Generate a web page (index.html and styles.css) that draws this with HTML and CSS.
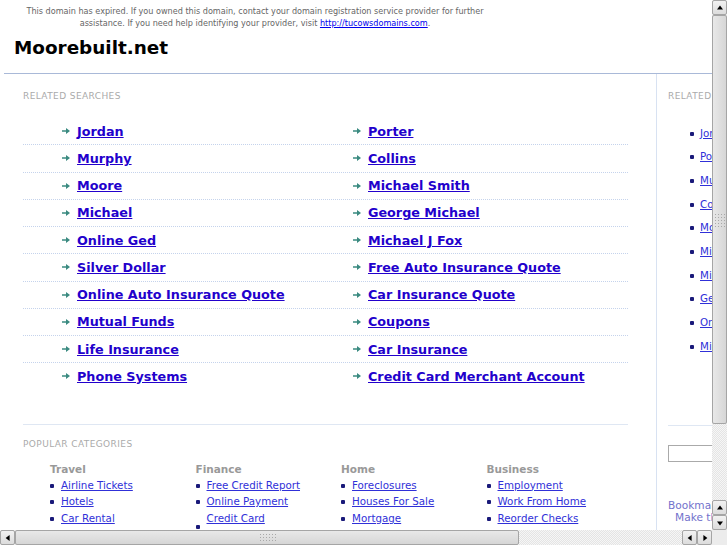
FILE: index.html
```html
<!DOCTYPE html>
<html lang="en">
<head>
  <meta charset="UTF-8">
  <title>Moorebuilt.net</title>
  <link rel="stylesheet" href="styles.css">
</head>
<body>
<div id="viewport">
<div id="page">
  <div id="notice">
    This domain has expired. If you owned this domain, contact your domain registration service provider for further assistance. If you need help identifying your provider, visit <a href="#">http://tucowsdomains.com</a>.
  </div>
  <div id="header"><h1>Moorebuilt.net</h1></div>
  <div id="main">
    <div id="content">
      <div class="label">RELATED SEARCHES</div>
      <div id="searches">
        <div class="row">
          <span class="item"><svg class="arrow" viewBox="0 0 8 6"><path d="M0 2.2h4V0l4 3-4 3V3.8H0z"/></svg><a href="#">Jordan</a></span>
          <span class="item"><svg class="arrow" viewBox="0 0 8 6"><path d="M0 2.2h4V0l4 3-4 3V3.8H0z"/></svg><a href="#">Porter</a></span>
        </div>
        <div class="row">
          <span class="item"><svg class="arrow" viewBox="0 0 8 6"><path d="M0 2.2h4V0l4 3-4 3V3.8H0z"/></svg><a href="#">Murphy</a></span>
          <span class="item"><svg class="arrow" viewBox="0 0 8 6"><path d="M0 2.2h4V0l4 3-4 3V3.8H0z"/></svg><a href="#">Collins</a></span>
        </div>
        <div class="row">
          <span class="item"><svg class="arrow" viewBox="0 0 8 6"><path d="M0 2.2h4V0l4 3-4 3V3.8H0z"/></svg><a href="#">Moore</a></span>
          <span class="item"><svg class="arrow" viewBox="0 0 8 6"><path d="M0 2.2h4V0l4 3-4 3V3.8H0z"/></svg><a href="#">Michael Smith</a></span>
        </div>
        <div class="row">
          <span class="item"><svg class="arrow" viewBox="0 0 8 6"><path d="M0 2.2h4V0l4 3-4 3V3.8H0z"/></svg><a href="#">Michael</a></span>
          <span class="item"><svg class="arrow" viewBox="0 0 8 6"><path d="M0 2.2h4V0l4 3-4 3V3.8H0z"/></svg><a href="#">George Michael</a></span>
        </div>
        <div class="row">
          <span class="item"><svg class="arrow" viewBox="0 0 8 6"><path d="M0 2.2h4V0l4 3-4 3V3.8H0z"/></svg><a href="#">Online Ged</a></span>
          <span class="item"><svg class="arrow" viewBox="0 0 8 6"><path d="M0 2.2h4V0l4 3-4 3V3.8H0z"/></svg><a href="#">Michael J Fox</a></span>
        </div>
        <div class="row">
          <span class="item"><svg class="arrow" viewBox="0 0 8 6"><path d="M0 2.2h4V0l4 3-4 3V3.8H0z"/></svg><a href="#">Silver Dollar</a></span>
          <span class="item"><svg class="arrow" viewBox="0 0 8 6"><path d="M0 2.2h4V0l4 3-4 3V3.8H0z"/></svg><a href="#">Free Auto Insurance Quote</a></span>
        </div>
        <div class="row">
          <span class="item"><svg class="arrow" viewBox="0 0 8 6"><path d="M0 2.2h4V0l4 3-4 3V3.8H0z"/></svg><a href="#">Online Auto Insurance Quote</a></span>
          <span class="item"><svg class="arrow" viewBox="0 0 8 6"><path d="M0 2.2h4V0l4 3-4 3V3.8H0z"/></svg><a href="#">Car Insurance Quote</a></span>
        </div>
        <div class="row">
          <span class="item"><svg class="arrow" viewBox="0 0 8 6"><path d="M0 2.2h4V0l4 3-4 3V3.8H0z"/></svg><a href="#">Mutual Funds</a></span>
          <span class="item"><svg class="arrow" viewBox="0 0 8 6"><path d="M0 2.2h4V0l4 3-4 3V3.8H0z"/></svg><a href="#">Coupons</a></span>
        </div>
        <div class="row">
          <span class="item"><svg class="arrow" viewBox="0 0 8 6"><path d="M0 2.2h4V0l4 3-4 3V3.8H0z"/></svg><a href="#">Life Insurance</a></span>
          <span class="item"><svg class="arrow" viewBox="0 0 8 6"><path d="M0 2.2h4V0l4 3-4 3V3.8H0z"/></svg><a href="#">Car Insurance</a></span>
        </div>
        <div class="row last">
          <span class="item"><svg class="arrow" viewBox="0 0 8 6"><path d="M0 2.2h4V0l4 3-4 3V3.8H0z"/></svg><a href="#">Phone Systems</a></span>
          <span class="item"><svg class="arrow" viewBox="0 0 8 6"><path d="M0 2.2h4V0l4 3-4 3V3.8H0z"/></svg><a href="#">Credit Card Merchant Account</a></span>
        </div>
      </div>
      <div id="popular">
        <div class="label">POPULAR CATEGORIES</div>
        <div id="cats">
          <div class="cat">
            <div class="cathead">Travel</div>
            <ul>
              <li><a href="#">Airline Tickets</a></li>
              <li><a href="#">Hotels</a></li>
              <li><a href="#">Car Rental</a></li>
              <li><a href="#">Vacations</a></li>
            </ul>
          </div>
          <div class="cat">
            <div class="cathead">Finance</div>
            <ul>
              <li><a href="#">Free Credit Report</a></li>
              <li><a href="#">Online Payment</a></li>
              <li class="nobullet"><a href="#">Credit Card</a></li>
              <li class="raised"><a href="#">Loans</a></li>
            </ul>
          </div>
          <div class="cat">
            <div class="cathead">Home</div>
            <ul>
              <li><a href="#">Foreclosures</a></li>
              <li><a href="#">Houses For Sale</a></li>
              <li><a href="#">Mortgage</a></li>
              <li><a href="#">Home Insurance</a></li>
            </ul>
          </div>
          <div class="cat">
            <div class="cathead">Business</div>
            <ul>
              <li><a href="#">Employment</a></li>
              <li><a href="#">Work From Home</a></li>
              <li><a href="#">Reorder Checks</a></li>
              <li><a href="#">Business Cards</a></li>
            </ul>
          </div>
        </div>
      </div>
    </div>
    <div id="side">
      <div class="label">RELATED SEARCHES</div>
      <ul id="sidelinks">
        <li><a href="#">Jordan</a></li>
        <li><a href="#">Porter</a></li>
        <li><a href="#">Murphy</a></li>
        <li><a href="#">Collins</a></li>
        <li><a href="#">Moore</a></li>
        <li><a href="#">Michael Smith</a></li>
        <li><a href="#">Michael</a></li>
        <li><a href="#">George Michael</a></li>
        <li><a href="#">Online Ged</a></li>
        <li><a href="#">Michael J Fox</a></li>
      </ul>
      <div id="sidesearch"><input type="text"></div>
      <div id="bookmark">
        <a href="#">Bookmark this page</a>
        <a href="#" class="homepage">Make this homepage</a>
      </div>
    </div>
  </div>
</div>
</div>
<div id="vscroll">
  <div class="btn up"></div>
  <div class="vthumb"><span class="grip"></span></div>
  <div class="btn up"></div>
  <div class="btn down"></div>
</div>
<div id="hscroll">
  <div class="btn left"></div>
  <div class="hthumb"><span class="grip"></span></div>
  <div class="htrack"></div>
  <div class="btn left"></div>
  <div class="btn right"></div>
</div>
<div id="corner"></div>
</body>
</html>
```

FILE: styles.css
```css
body {
  margin: 0;
  overflow: hidden;
  background: #fff;
  font-family: "DejaVu Sans", sans-serif;
}
a {
  color: #2200cc;
}
#viewport {
  width: 712px;
  height: 530px;
  overflow: hidden;
}
#page {
  width: 943px;
}
#notice {
  width: 480px;
  margin-left: 15px;
  padding-top: 5px;
  text-align: center;
  font-family: "DejaVu Sans Condensed", "DejaVu Sans", sans-serif;
  font-size: 9px;
  line-height: 12px;
  color: #666;
}
#notice a {
  color: #0000ee;
}
#header {
  margin: 0 0 0 4px;
  border-bottom: 1px solid #a9b9d8;
  padding: 8px 0 14px 10px;
}
h1 {
  margin: 0;
  font-size: 18.4px;
  line-height: 22px;
  color: #000;
}
#main {
  display: flex;
  margin-left: 4px;
}
#content {
  width: 605px;
  padding: 16px 28px 0 19px;
}
.label {
  font-size: 9px;
  line-height: 12px;
  letter-spacing: 0.4px;
  color: #aaa;
}
#searches {
  margin-top: 16px;
}
.row {
  display: flex;
  height: 26.25px;
  align-items: center;
  padding-left: 39px;
  border-bottom: 1px dotted #c5d3ec;
}
.row.last {
  border-bottom: none;
}
.item {
  flex: none;
  display: flex;
  align-items: center;
  width: 291px;
  font-size: 12.75px;
  font-weight: bold;
}
.arrow {
  width: 8px;
  height: 6px;
  margin-right: 7px;
  fill: #3a8a80;
}
#popular {
  margin-top: 34px;
  border-top: 1px solid #dfe7f3;
  padding-top: 13px;
}
#cats {
  display: grid;
  grid-template-columns: repeat(4, 145.5px);
  padding-left: 27px;
  margin-top: 12px;
}
.cathead {
  font-size: 10.5px;
  font-weight: bold;
  line-height: 14px;
  color: #999;
  margin-bottom: 1px;
}
.cat ul {
  margin: 0;
  padding: 0;
  list-style: none;
}
.cat li {
  display: flex;
  align-items: center;
  height: 16.5px;
  font-size: 10.3px;
}
.cat li::before {
  content: "";
  width: 4px;
  height: 4px;
  border-radius: 1px;
  background: #1a1a7a;
  margin: 2px 7px 0 0;
}
.cat li.nobullet::before {
  background: none;
}
.cat li.raised::before {
  margin-top: -14px;
}
.cat a {
  color: #3030d8;
}
#side {
  width: 190px;
  border-left: 1px solid #d8e2f2;
  padding: 16px 0 0 11px;
  height: 460px;
}
#sidelinks {
  margin: 19px 0 0;
  padding: 0;
  list-style: none;
  height: 304px;
}
#sidelinks li {
  display: flex;
  align-items: center;
  height: 23.67px;
  padding-left: 22px;
  font-size: 10.3px;
}
#sidelinks li::before {
  content: "";
  width: 4px;
  height: 4px;
  border-radius: 1px;
  background: #1a1a7a;
  margin: 2px 6px 0 0;
}
#sidelinks a {
  color: #3030d8;
}
#sidesearch {
  border-top: 1px solid #dfe7f3;
  padding-top: 19px;
  width: 110px;
}
#sidesearch input {
  display: block;
  width: 140px;
  height: 17px;
  box-sizing: border-box;
  border: 1px solid #aaa;
  margin: 0;
}
#bookmark {
  margin-top: 37px;
  white-space: nowrap;
  font-size: 10.6px;
  line-height: 12px;
}
#bookmark a {
  display: block;
  color: #7272cc;
  text-decoration: none;
}
#bookmark a.homepage {
  padding-left: 7px;
}

/* fake browser scrollbars */
#vscroll {
  position: fixed;
  top: 0;
  right: 0;
  width: 15px;
  height: 530px;
  display: flex;
  flex-direction: column;
  background: repeating-conic-gradient(#e4e4e4 0 25%, #f6f6f6 0 50%) 0 0 / 2px 2px;
}
#hscroll {
  position: fixed;
  left: 0;
  bottom: 0;
  width: 712px;
  height: 15px;
  display: flex;
  background: repeating-conic-gradient(#e4e4e4 0 25%, #f6f6f6 0 50%) 0 0 / 2px 2px;
}
#corner {
  position: fixed;
  right: 0;
  bottom: 0;
  width: 15px;
  height: 15px;
  background: #ececec;
}
.btn {
  flex: none;
  width: 15px;
  height: 15px;
  box-sizing: border-box;
  border: 1px solid #a5a5a5;
  border-radius: 2px;
  background: linear-gradient(#f2f2f2, #dcdcdc);
  position: relative;
}
.btn::after {
  content: "";
  position: absolute;
  left: 50%;
  top: 50%;
  border: 3.5px solid transparent;
}
.btn.up::after {
  border-bottom: 4px solid #000;
  border-top: 0;
  transform: translate(-50%, -60%);
}
.btn.down::after {
  border-top: 4px solid #000;
  border-bottom: 0;
  transform: translate(-50%, -40%);
}
.btn.left::after {
  border-right: 4px solid #000;
  border-left: 0;
  transform: translate(-60%, -50%);
}
.btn.right::after {
  border-left: 4px solid #000;
  border-right: 0;
  transform: translate(-40%, -50%);
}
.vthumb {
  height: 410px;
  margin-bottom: 76px;
  box-sizing: border-box;
  border: 1px solid #a5a5a5;
  border-radius: 2px;
  background: linear-gradient(to right, #e8e8e8, #d6d6d6);
  display: flex;
  align-items: center;
  justify-content: center;
}
.hthumb {
  width: 505px;
  box-sizing: border-box;
  border: 1px solid #a5a5a5;
  border-radius: 2px;
  background: linear-gradient(#e8e8e8, #d6d6d6);
  display: flex;
  align-items: center;
  justify-content: center;
}
.htrack {
  width: 163px;
}
.grip {
  width: 12px;
  height: 14px;
  background: radial-gradient(circle, #a8a8a8 0.6px, transparent 0.8px) 0 0 / 3px 3px;
}
.hthumb .grip {
  width: 17px;
  height: 9px;
}
```
